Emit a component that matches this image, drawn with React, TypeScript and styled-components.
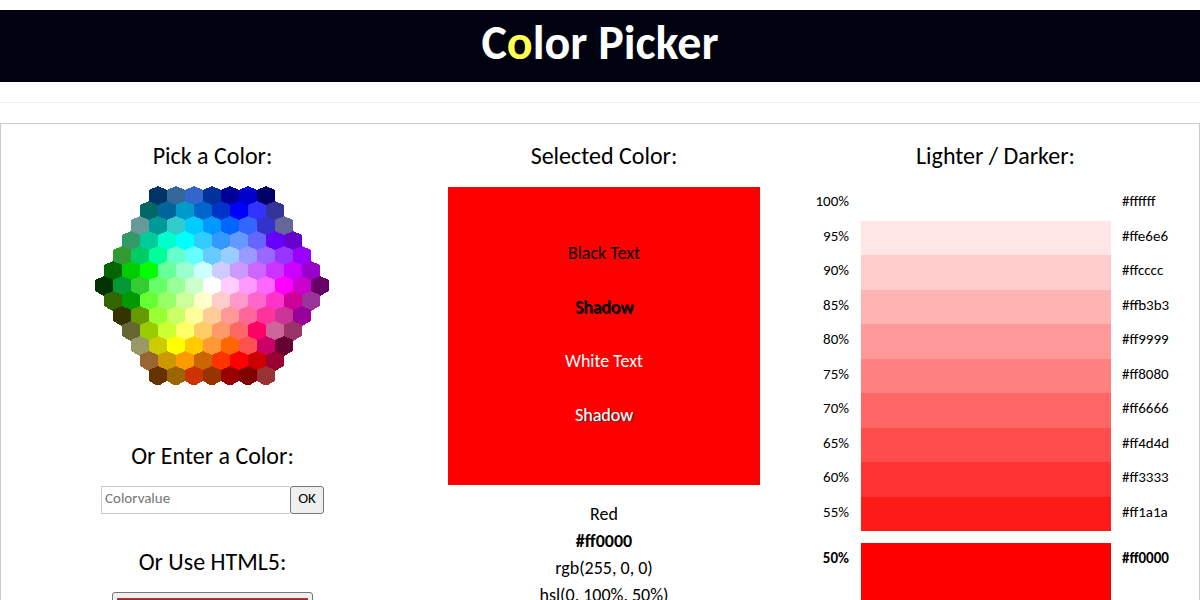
import React, { useState } from "react";
import styled, { createGlobalStyle } from "styled-components";

const GlobalStyle = createGlobalStyle`
  html { scrollbar-width: none; }
  *, *::before, *::after { box-sizing: border-box; }
  body {
    margin: 0;
    background: #fff;
    color: #000;
    font-family: Calibri, Carlito, Lato, sans-serif;
    font-size: 18px;
    line-height: 27px;
  }
`;

const Banner = styled.header`
  margin-top: 10px;
  padding: 0 16px 6px;
  background: #00030f;
  text-align: center;
`;

const Title = styled.h1`
  margin: 0;
  color: #fff;
  font-size: 48px;
  line-height: 66px;
  font-weight: 700;
`;

const Accent = styled.span`
  color: #ffff55;
`;

const Divider = styled.hr`
  margin: 20px 0;
  border: 0;
  border-top: 1px solid #eee;
`;

const Panel = styled.main`
  display: grid;
  grid-template-columns: 423fr 360fr 415fr;
  border: 1px solid #ccc;
`;

const Heading = styled.h3`
  margin: 0 0 12px;
  font-size: 24px;
  line-height: 36px;
  font-weight: 400;
`;

const Column = styled.section`
  padding-top: 14px;
  text-align: center;
`;

const MiddleColumn = styled(Column)`
  padding-left: 24px;
  padding-right: 24px;
`;

const ShadeColumn = styled(Column)`
  padding-left: 8px;
`;

const HexMap = styled.svg`
  display: block;
  margin: 0 auto 53px;
`;

const HexCell = styled.polygon`
  cursor: pointer;
`;

const EntryForm = styled.form`
  display: flex;
  justify-content: center;
  margin-bottom: 30px;
`;

const EntryInput = styled.input`
  width: 189px;
  height: 28px;
  padding: 0 3px 4px;
  border: 1px solid #ccc;
  border-right: 0;
  border-radius: 0;
  font: inherit;
  font-size: 15px;
  &::placeholder { color: #757575; }
`;

const EntryButton = styled.button`
  width: 34px;
  height: 28px;
  padding: 0 0 4px;
  border: 1px solid #767676;
  border-radius: 3px;
  background: #efefef;
  color: #000;
  font: inherit;
  font-size: 15px;
  line-height: 22px;
`;

const NativePicker = styled.input`
  appearance: none;
  display: block;
  width: 201px;
  height: 50px;
  margin: 0 auto 40px;
  padding: 1px 2px;
  border: 1px solid #767676;
  border-radius: 3px;
  background: #efefef;
  &::-webkit-color-swatch-wrapper { padding: 4px 2px; }
  &::-webkit-color-swatch { border: 1px solid #9c3a3e; border-radius: 0; }
`;

const Swatch = styled.div<{ $color: string }>`
  display: flex;
  flex-direction: column;
  gap: 27px;
  margin: 13px 0 16px;
  padding: 53px 0 56px;
  background: ${(p) => p.$color};
`;

const Sample = styled.p<{ $light?: boolean; $shadow?: boolean }>`
  margin: 0;
  color: ${(p) => (p.$light ? "#fff" : "#000")};
  text-shadow: ${(p) => (p.$shadow ? `1px 1px 0 ${p.$light ? "#444" : "#111"}` : "none")};
`;

const Value = styled.div<{ $bold?: boolean }>`
  font-weight: ${(p) => (p.$bold ? 700 : 400)};
`;

const ShadeTable = styled.table`
  width: 100%;
  border-collapse: collapse;
  table-layout: fixed;
  font-size: 15px;
  line-height: 30px;
`;

const ShadeRow = styled.tr<{ $bold?: boolean; $tall?: boolean }>`
  height: ${(p) => (p.$bold ? 69 : p.$tall ? 35 : 34)}px;
  font-weight: ${(p) => (p.$bold ? 700 : 400)};
`;

const SpacerRow = styled.tr`
  height: 12px;
  line-height: 0;
`;

const Percent = styled.td`
  width: 69px;
  padding: 0 12px 0 0;
  text-align: right;
  vertical-align: top;
`;

const Bar = styled.td<{ $color: string }>`
  width: 250px;
  padding: 0;
  background: ${(p) => p.$color};
  cursor: pointer;
`;

const Code = styled.td`
  padding: 0 0 0 11px;
  text-align: left;
  vertical-align: top;
`;

const hexRows = [
  "003366 336699 3366cc 003399 000099 0000cc 000066",
  "006666 006699 0099cc 0066cc 0033cc 0000ff 3333ff 333399",
  "669999 009999 33cccc 00ccff 0099ff 0066ff 3366ff 3333cc 666699",
  "339966 00cc99 00ffcc 00ffff 33ccff 3399ff 6699ff 6666ff 6600ff 6600cc",
  "339933 00cc66 00ff99 66ffcc 66ffff 66ccff 99ccff 9999ff 9966ff 9933ff 9900ff",
  "006600 00cc00 00ff00 66ff99 99ffcc ccffff ccccff cc99ff cc66ff cc33ff cc00ff 9900cc",
  "003300 009933 33cc33 66ff66 99ff99 ccffcc ffffff ffccff ff99ff ff66ff ff00ff cc00cc 660066",
  "336600 009900 66ff33 99ff66 ccff99 ffffcc ffcccc ff99cc ff66cc ff33cc cc0099 993399",
  "333300 669900 99ff33 ccff66 ffff99 ffcc99 ff9999 ff6699 ff3399 cc3399 990099",
  "666633 99cc00 ccff33 ffff66 ffcc66 ff9966 ff6666 ff0066 cc6699 993366",
  "999966 cccc00 ffff00 ffcc00 ff9933 ff6600 ff5050 cc0066 660033",
  "996633 cc9900 ff9900 cc6600 ff3300 ff0000 cc0000 990033",
  "663300 996600 cc3300 993300 990000 800000 993333",
].map((row) => row.split(" "));

const lighter: [string, string][] = [
  ["100%", "#ffffff"],
  ["95%", "#ffe6e6"],
  ["90%", "#ffcccc"],
  ["85%", "#ffb3b3"],
  ["80%", "#ff9999"],
  ["75%", "#ff8080"],
  ["70%", "#ff6666"],
  ["65%", "#ff4d4d"],
  ["60%", "#ff3333"],
  ["55%", "#ff1a1a"],
];

function HexPicker() {
  return (
    <HexMap width="235" height="199" viewBox="0 0 235 199" shapeRendering="crispEdges" role="img" aria-label="Color map">
      {hexRows.map((row, r) =>
        row.map((color, c) => {
          const x = (13 - row.length) * 9 + c * 18;
          const y = r * 15;
          const points = [[9, 0], [18, 4], [18, 15], [9, 20], [0, 15], [0, 4]]
            .map(([dx, dy]) => `${x + dx},${y + dy}`)
            .join(" ");
          return <HexCell key={color + c} points={points} fill={`#${color}`} />;
        })
      )}
    </HexMap>
  );
}

export default function App() {
  const [entry, setEntry] = useState("");
  const [native, setNative] = useState("#b3202a");
  return (
    <>
      <GlobalStyle />
      <Banner>
        <Title>
          C<Accent>o</Accent>lor Picker
        </Title>
      </Banner>
      <Divider />
      <Panel>
        <Column>
          <Heading>Pick a Color:</Heading>
          <HexPicker />
          <Heading>Or Enter a Color:</Heading>
          <EntryForm onSubmit={(e) => e.preventDefault()}>
            <EntryInput
              type="text"
              aria-label="Color value"
              placeholder="Colorvalue"
              value={entry}
              onChange={(e) => setEntry(e.target.value)}
            />
            <EntryButton type="submit">OK</EntryButton>
          </EntryForm>
          <Heading>Or Use HTML5:</Heading>
          <NativePicker
            type="color"
            aria-label="Or Use HTML5"
            value={native}
            onChange={(e) => setNative(e.target.value)}
          />
        </Column>
        <MiddleColumn>
          <Heading>Selected Color:</Heading>
          <Swatch $color="#ff0000">
            <Sample>Black Text</Sample>
            <Sample $shadow>Shadow</Sample>
            <Sample $light>White Text</Sample>
            <Sample $light $shadow>Shadow</Sample>
          </Swatch>
          <Value>Red</Value>
          <Value $bold>#ff0000</Value>
          <Value>rgb(255, 0, 0)</Value>
          <Value>hsl(0, 100%, 50%)</Value>
        </MiddleColumn>
        <ShadeColumn>
          <Heading>Lighter / Darker:</Heading>
          <ShadeTable>
            <tbody>
              {lighter.map(([percent, color], i) => (
                <ShadeRow key={color} $tall={i % 2 === 0}>
                  <Percent>{percent}</Percent>
                  <Bar $color={color} />
                  <Code>{color}</Code>
                </ShadeRow>
              ))}
              <SpacerRow>
                <td colSpan={3} />
              </SpacerRow>
              <ShadeRow $bold>
                <Percent>50%</Percent>
                <Bar $color="#ff0000" />
                <Code>#ff0000</Code>
              </ShadeRow>
            </tbody>
          </ShadeTable>
        </ShadeColumn>
      </Panel>
    </>
  );
}
